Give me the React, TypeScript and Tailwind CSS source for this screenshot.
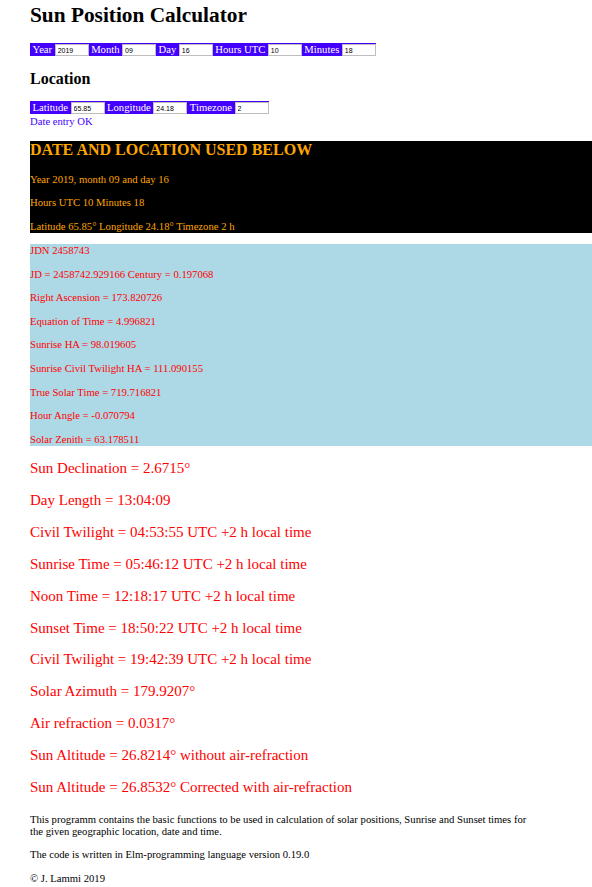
const dateFields = [
  { label: "Year", value: "2019" },
  { label: "Month", value: "09" },
  { label: "Day", value: "16" },
  { label: "Hours UTC", value: "10" },
  { label: "Minutes", value: "18" },
];

const locationFields = [
  { label: "Latitude", value: "65.85" },
  { label: "Longitude", value: "24.18" },
  { label: "Timezone", value: "2" },
];

const usedLines = [
  "Year 2019, month 09 and day 16",
  "Hours UTC 10 Minutes 18",
  "Latitude 65.85° Longitude 24.18° Timezone 2 h",
];

const debugLines = [
  "JDN 2458743",
  "JD = 2458742.929166 Century = 0.197068",
  "Right Ascension = 173.820726",
  "Equation of Time = 4.996821",
  "Sunrise HA = 98.019605",
  "Sunrise Civil Twilight HA = 111.090155",
  "True Solar Time = 719.716821",
  "Hour Angle = -0.070794",
  "Solar Zenith = 63.178511",
];

const results = [
  "Sun Declination = 2.6715°",
  "Day Length = 13:04:09",
  "Civil Twilight = 04:53:55 UTC +2 h local time",
  "Sunrise Time = 05:46:12 UTC +2 h local time",
  "Noon Time = 12:18:17 UTC +2 h local time",
  "Sunset Time = 18:50:22 UTC +2 h local time",
  "Civil Twilight = 19:42:39 UTC +2 h local time",
  "Solar Azimuth = 179.9207°",
  "Air refraction = 0.0317°",
  "Sun Altitude = 26.8214° without air-refraction",
  "Sun Altitude = 26.8532° Corrected with air-refraction",
];

function FieldRow({ fields }: { fields: { label: string; value: string }[] }) {
  return (
    <div className="flex h-[13px] w-max items-end bg-[#4400ff]">
      {fields.map((f) => (
        <div key={f.label} className="flex h-full items-end">
          <span className="self-center px-[2.5px] text-[10.67px] leading-[13px] text-white">{f.label}</span>
          <input
            defaultValue={f.value}
            className="h-[12px] w-[34px] border border-[#bdbdbd] bg-white pl-[2px] font-['Liberation_Sans',sans-serif] text-[7px] leading-[10px] text-black outline-none"
          />
        </div>
      ))}
    </div>
  );
}

export default function App() {
  return (
    <div className="min-h-screen bg-white pb-[6px] pl-[30px] font-['Liberation_Serif',serif] text-black">
      <h1 className="pt-[3px] text-[21.33px] font-bold leading-[24px]">Sun Position Calculator</h1>

      <div className="mt-[16px]">
        <FieldRow fields={dateFields} />
      </div>

      <h2 className="mt-[14px] text-[16px] font-bold leading-[18px]">Location</h2>

      <div className="mt-[13px]">
        <FieldRow fields={locationFields} />
      </div>
      <div className="mt-[1px] text-[10.67px] leading-[13px] text-[#4400ff]">Date entry OK</div>

      {/* values in use */}
      <div className="mt-[13px] bg-black text-[#ffa500]">
        <h3 className="text-[16px] font-bold leading-[18px]">DATE AND LOCATION USED BELOW</h3>
        <div className="mt-[13.5px] flex flex-col gap-[10.75px] text-[10.67px] leading-[13px]">
          {usedLines.map((l) => (
            <p key={l}>{l}</p>
          ))}
        </div>
      </div>

      <div className="mt-[11px] flex flex-col gap-[10.6px] bg-[#add8e6] text-[10.67px] leading-[13px] text-[#ff0000]">
        {debugLines.map((l) => (
          <p key={l}>{l}</p>
        ))}
      </div>

      <div className="mt-[14.4px] flex flex-col gap-[14.9px] text-[15px] leading-[17px] text-[#ff0000]">
        {results.map((l, i) => (
          <p key={i}>{l}</p>
        ))}
      </div>

      <div className="mt-[16.6px] flex max-w-[505px] flex-col gap-[10.75px] text-[10.67px] leading-[12.5px]">
        <p>
          This programm contains the basic functions to be used in calculation of solar positions, Sunrise and Sunset
          times for the given geographic location, date and time.
        </p>
        <p>The code is written in Elm-programming language version 0.19.0</p>
        <p>© J. Lammi 2019</p>
      </div>
    </div>
  );
}
